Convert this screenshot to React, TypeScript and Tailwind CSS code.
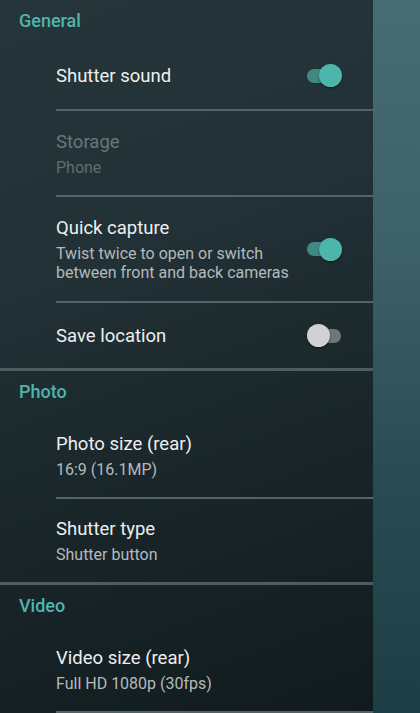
import React from 'react';

type Pref = {
  title: string;
  summary?: string[];
  toggle?: boolean;
  disabled?: boolean;
  height: string;
};

const sections: { header: string; prefs: Pref[] }[] = [
  {
    header: 'General',
    prefs: [
      { title: 'Shutter sound', toggle: true, height: 'h-[67px]' },
      { title: 'Storage', summary: ['Phone'], disabled: true, height: 'h-[84px]' },
      {
        title: 'Quick capture',
        summary: ['Twist twice to open or switch', 'between front and back cameras'],
        toggle: true,
        height: 'h-[104px]',
      },
      { title: 'Save location', toggle: false, height: 'h-[65px]' },
    ],
  },
  {
    header: 'Photo',
    prefs: [
      { title: 'Photo size (rear)', summary: ['16:9 (16.1MP)'], height: 'h-[84px]' },
      { title: 'Shutter type', summary: ['Shutter button'], height: 'h-[83px]' },
    ],
  },
  {
    header: 'Video',
    prefs: [{ title: 'Video size (rear)', summary: ['Full HD 1080p (30fps)'], height: 'h-[84px]' }],
  },
];

const Switch: React.FC<{ on: boolean }> = ({ on }) => (
  <div className="relative w-[36px] h-[23px] flex items-center">
    <div className={`w-[34px] h-[14px] rounded-full ${on ? 'bg-[#3e8a83]' : 'bg-[#6e7779]'}`} />
    <div
      className={`absolute top-0 w-[23px] h-[23px] rounded-full shadow-[0_1px_2px_rgba(0,0,0,0.5)] ${
        on ? 'left-[12px] bg-[#4db6ac]' : 'left-[0px] bg-[#cfd2d3]'
      }`}
    />
  </div>
);

const PrefRow: React.FC<{ pref: Pref; divider: boolean }> = ({ pref, divider }) => (
  <div>
    <div className={`flex items-center pl-[56px] pr-[30px] ${pref.height}`}>
      <div className="flex-1">
        <div
          className={`text-[18.5px] leading-[24px] ${pref.disabled ? 'text-[#66777a]' : 'text-[#eceff0]'}`}
        >
          {pref.title}
        </div>
        {pref.summary && (
          <div
            className={`mt-[4px] text-[16px] leading-[19px] ${
              pref.disabled ? 'text-[#5f6f72]' : 'text-[#b3babb]'
            }`}
          >
            {pref.summary.map((s) => (
              <div key={s}>{s}</div>
            ))}
          </div>
        )}
      </div>
      {pref.toggle !== undefined && <Switch on={pref.toggle} />}
    </div>
    {divider && <div className="ml-[56px] h-[2px] bg-[#536367]" />}
  </div>
);

export default function App() {
  return (
    <div
      className="w-[420px] h-[713px] overflow-hidden flex"
      style={{ fontFamily: 'Roboto, "Noto Sans", sans-serif' }}
    >
      {/* settings panel */}
      <div className="w-[373px] h-full bg-[linear-gradient(160deg,#263539_0%,#223136_35%,#1a272b_60%,#111b1e_100%)]">
        {sections.map((sec, si) => (
          <div key={sec.header}>
            {si > 0 && <div className="h-[3px] bg-[#4f5c60]" />}
            <div className="h-[42px] pl-[19px] flex items-center pb-[1px]">
              <span className="text-[18px] font-medium text-[#4db6ac]">{sec.header}</span>
            </div>
            {sec.prefs.map((p, i) => (
              <PrefRow
                key={p.title}
                pref={p}
                divider={i < sec.prefs.length - 1 || si === sections.length - 1}
              />
            ))}
          </div>
        ))}
      </div>
      {/* background strip */}
      <div className="flex-1 h-full bg-[linear-gradient(180deg,#466c74_0%,#3d6169_35%,#2a4d54_65%,#1c3d43_100%)]" />
    </div>
  );
}
